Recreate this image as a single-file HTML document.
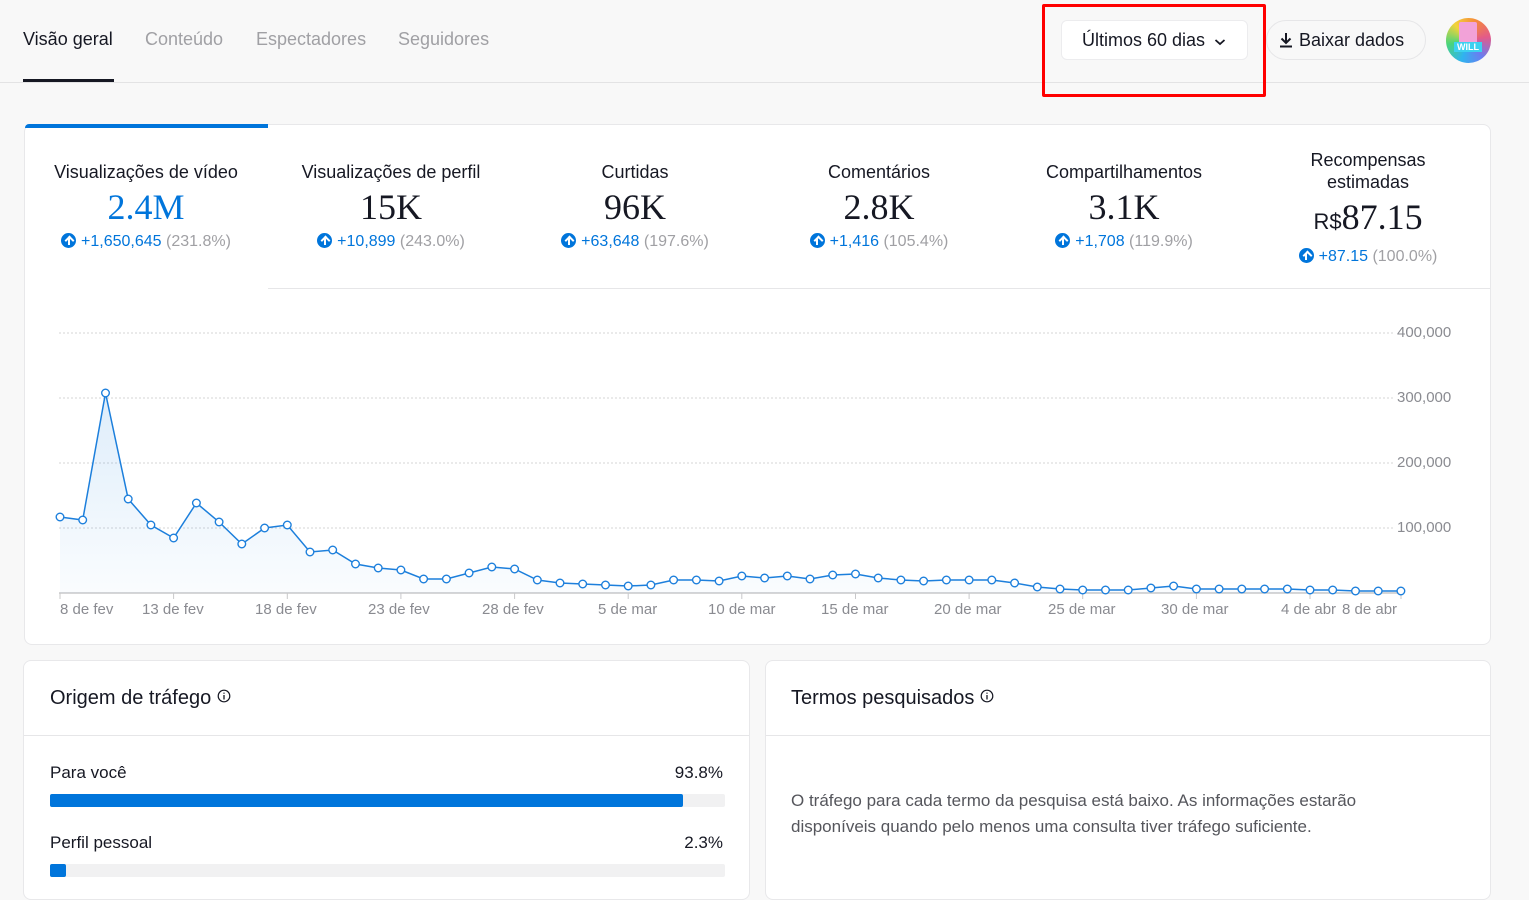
<!DOCTYPE html>
<html><head><meta charset="utf-8">
<style>
*{box-sizing:border-box;margin:0;padding:0}
body{width:1529px;height:880px;overflow:hidden;background:#f8f8f8;font-family:"Liberation Sans",Arial,sans-serif;color:#161823;position:relative}
.a{position:absolute}
.tab{position:absolute;top:29px;font-size:18px;color:#a0a0a4;white-space:nowrap}
.card{position:absolute;background:#fff;border:1px solid #e8e8ea;border-radius:8px;overflow:hidden}
.m{position:absolute;text-align:center;width:240px}
.m .l{font-size:18px;color:#161823;line-height:22px}
.m .v{font-family:"Liberation Serif",serif;font-size:36px;line-height:40px;margin-top:4px}
.m .d{font-size:16px;color:#0075db;margin-top:6px;white-space:nowrap}
.m .d span{color:#a0a0a4}
.up{display:inline-block;width:15px;height:15px;border-radius:50%;background:#0075db;vertical-align:-2px;margin-right:5px;position:relative}
.up:after{content:"";position:absolute;left:3px;top:3px;width:9px;height:9px;background:
 linear-gradient(#fff,#fff) 3.5px 2px/2px 7px no-repeat}
.up:before{content:"";position:absolute;left:4px;top:3px;width:5px;height:5px;border-left:2px solid #fff;border-top:2px solid #fff;transform:rotate(45deg);transform-origin:center;top:4px;left:5px}
.xl{position:absolute;top:601px;font-size:15px;color:#8a8b91;white-space:nowrap}
.yl{position:absolute;left:1397px;font-size:15px;color:#8a8b91}
</style></head><body>
<div class="tab" style="left:23px;color:#161823;font-weight:500">Visão geral</div>
<div class="tab" style="left:145px">Conteúdo</div>
<div class="tab" style="left:256px">Espectadores</div>
<div class="tab" style="left:398px">Seguidores</div>
<div class="a" style="left:23px;top:79px;width:91px;height:3px;background:#161823"></div>
<div class="a" style="left:0;top:82px;width:1529px;height:1px;background:#e3e3e4"></div>

<div class="a" style="left:1061px;top:20px;width:187px;height:40px;background:#fff;border:1px solid #ececee;border-radius:6px;font-size:18px;line-height:38px;padding-left:20px">Últimos 60 dias
<svg width="12" height="8" viewBox="0 0 12 8" style="margin-left:4px"><path d="M1.5 2 L6 6 L10.5 2" fill="none" stroke="#161823" stroke-width="1.8"/></svg></div>
<div class="a" style="left:1042px;top:4px;width:224px;height:93px;border:3px solid #f00;border-radius:2px"></div>
<div class="a" style="left:1266px;top:20px;width:160px;height:40px;border:1px solid #e6e6e8;border-radius:20px;font-size:18px;line-height:38px;padding-left:12px">
<svg width="14" height="16" viewBox="0 0 14 16" style="vertical-align:-2px;margin-right:6px"><path d="M7 1 V11 M2.5 6.5 L7 11 L11.5 6.5 M1 14.5 H13" fill="none" stroke="#161823" stroke-width="2"/></svg>Baixar dados</div>
<div class="a" style="left:1446px;top:18px;width:45px;height:45px;border-radius:50%;background:conic-gradient(from 200deg,#2fb4ef,#4ad47a,#f3d33a,#f58a3a,#e35a8a,#6a7df0,#2fb4ef)"></div>
<div class="a" style="left:1459px;top:22px;width:18px;height:24px;background:#f2a2d8;border-radius:2px"></div>
<div class="a" style="left:1454px;top:42px;width:28px;height:10px;background:#3cd1f0;font-size:9px;font-weight:bold;color:#fff;text-align:center;line-height:10px">WILL</div>

<div class="card" style="left:24px;top:124px;width:1467px;height:521px"></div>
<div class="a" style="left:25px;top:124px;width:243px;height:4px;background:#0075db;border-radius:4px 0 0 0"></div>
<div class="a" style="left:268px;top:288px;width:1222px;height:1px;background:#e6e6e8"></div>

<div class="m" style="left:26px;top:161px"><div class="l">Visualizações de vídeo</div><div class="v" style="color:#0075db">2.4M</div><div class="d"><i class="up"></i>+1,650,645 <span>(231.8%)</span></div></div>
<div class="m" style="left:271px;top:161px"><div class="l">Visualizações de perfil</div><div class="v">15K</div><div class="d"><i class="up"></i>+10,899 <span>(243.0%)</span></div></div>
<div class="m" style="left:515px;top:161px"><div class="l">Curtidas</div><div class="v">96K</div><div class="d"><i class="up"></i>+63,648 <span>(197.6%)</span></div></div>
<div class="m" style="left:759px;top:161px"><div class="l">Comentários</div><div class="v">2.8K</div><div class="d"><i class="up"></i>+1,416 <span>(105.4%)</span></div></div>
<div class="m" style="left:1004px;top:161px"><div class="l">Compartilhamentos</div><div class="v">3.1K</div><div class="d"><i class="up"></i>+1,708 <span>(119.9%)</span></div></div>
<div class="m" style="left:1248px;top:149px"><div class="l">Recompensas<br>estimadas</div><div class="v"><span style="font-family:'Liberation Sans',sans-serif;font-size:22px;font-weight:500">R$</span>87.15</div><div class="d"><i class="up"></i>+87.15 <span>(100.0%)</span></div></div>

<svg class="a" style="left:0;top:0" width="1529" height="640">
<defs><linearGradient id="g" x1="0" y1="0" x2="0" y2="1"><stop offset="0" stop-color="#0075db" stop-opacity=".13"/><stop offset="1" stop-color="#0075db" stop-opacity=".02"/></linearGradient></defs>
<g stroke="#d4d4d6" stroke-dasharray="2 2" stroke-width="1">
<line x1="59" y1="333" x2="1395" y2="333"/><line x1="59" y1="398" x2="1395" y2="398"/><line x1="59" y1="463" x2="1395" y2="463"/><line x1="59" y1="528" x2="1395" y2="528"/>
</g>
<line x1="59" y1="593" x2="1402" y2="593" stroke="#c8c8ca" stroke-width="1.5"/>
<g stroke="#c8c8ca"><line x1="60" y1="593" x2="60" y2="599"/><line x1="173.6" y1="593" x2="173.6" y2="599"/><line x1="287.3" y1="593" x2="287.3" y2="599"/><line x1="400.9" y1="593" x2="400.9" y2="599"/><line x1="514.6" y1="593" x2="514.6" y2="599"/><line x1="628.2" y1="593" x2="628.2" y2="599"/><line x1="741.8" y1="593" x2="741.8" y2="599"/><line x1="855.5" y1="593" x2="855.5" y2="599"/><line x1="969.1" y1="593" x2="969.1" y2="599"/><line x1="1082.7" y1="593" x2="1082.7" y2="599"/><line x1="1196.4" y1="593" x2="1196.4" y2="599"/><line x1="1310" y1="593" x2="1310" y2="599"/><line x1="1401" y1="593" x2="1401" y2="599"/></g>
<polygon fill="url(#g)" points="60,593 60,517 82.7,520 105.5,393 128.2,499 150.9,525 173.6,538 196.4,503 219.1,522 241.8,544 264.6,528 287.3,525 310,552 332.7,550 355.5,564 378.2,568 400.9,570 423.6,579 446.4,579 469.1,573 491.8,567 514.6,569 537.3,580 560,583 582.7,584 605.5,585 628.2,586 650.9,585 673.6,580 696.4,580 719.1,581 741.8,576 764.6,578 787.3,576 810,579 832.7,575 855.5,574 878.2,578 900.9,580 923.6,581 946.4,580 969.1,580 991.8,580 1014.6,583 1037.3,587 1060,589 1082.7,590 1105.5,590 1128.2,590 1150.9,588 1173.6,586 1196.4,589 1219.1,589 1241.8,589 1264.6,589 1287.3,589 1310,590 1332.7,590 1355.5,591 1378.2,591 1400.9,591 1400.9,593"/>
<polyline id="pl" fill="none" stroke="#1c7fdc" stroke-width="1.5" points="60,517 82.7,520 105.5,393 128.2,499 150.9,525 173.6,538 196.4,503 219.1,522 241.8,544 264.6,528 287.3,525 310,552 332.7,550 355.5,564 378.2,568 400.9,570 423.6,579 446.4,579 469.1,573 491.8,567 514.6,569 537.3,580 560,583 582.7,584 605.5,585 628.2,586 650.9,585 673.6,580 696.4,580 719.1,581 741.8,576 764.6,578 787.3,576 810,579 832.7,575 855.5,574 878.2,578 900.9,580 923.6,581 946.4,580 969.1,580 991.8,580 1014.6,583 1037.3,587 1060,589 1082.7,590 1105.5,590 1128.2,590 1150.9,588 1173.6,586 1196.4,589 1219.1,589 1241.8,589 1264.6,589 1287.3,589 1310,590 1332.7,590 1355.5,591 1378.2,591 1400.9,591"/>
<g fill="#fff" stroke="#1c7fdc" stroke-width="1.4">
<circle cx="60" cy="517" r="3.8"/><circle cx="82.7" cy="520" r="3.8"/><circle cx="105.5" cy="393" r="3.8"/><circle cx="128.2" cy="499" r="3.8"/><circle cx="150.9" cy="525" r="3.8"/><circle cx="173.6" cy="538" r="3.8"/><circle cx="196.4" cy="503" r="3.8"/><circle cx="219.1" cy="522" r="3.8"/><circle cx="241.8" cy="544" r="3.8"/><circle cx="264.6" cy="528" r="3.8"/><circle cx="287.3" cy="525" r="3.8"/><circle cx="310" cy="552" r="3.8"/><circle cx="332.7" cy="550" r="3.8"/><circle cx="355.5" cy="564" r="3.8"/><circle cx="378.2" cy="568" r="3.8"/><circle cx="400.9" cy="570" r="3.8"/><circle cx="423.6" cy="579" r="3.8"/><circle cx="446.4" cy="579" r="3.8"/><circle cx="469.1" cy="573" r="3.8"/><circle cx="491.8" cy="567" r="3.8"/><circle cx="514.6" cy="569" r="3.8"/><circle cx="537.3" cy="580" r="3.8"/><circle cx="560" cy="583" r="3.8"/><circle cx="582.7" cy="584" r="3.8"/><circle cx="605.5" cy="585" r="3.8"/><circle cx="628.2" cy="586" r="3.8"/><circle cx="650.9" cy="585" r="3.8"/><circle cx="673.6" cy="580" r="3.8"/><circle cx="696.4" cy="580" r="3.8"/><circle cx="719.1" cy="581" r="3.8"/><circle cx="741.8" cy="576" r="3.8"/><circle cx="764.6" cy="578" r="3.8"/><circle cx="787.3" cy="576" r="3.8"/><circle cx="810" cy="579" r="3.8"/><circle cx="832.7" cy="575" r="3.8"/><circle cx="855.5" cy="574" r="3.8"/><circle cx="878.2" cy="578" r="3.8"/><circle cx="900.9" cy="580" r="3.8"/><circle cx="923.6" cy="581" r="3.8"/><circle cx="946.4" cy="580" r="3.8"/><circle cx="969.1" cy="580" r="3.8"/><circle cx="991.8" cy="580" r="3.8"/><circle cx="1014.6" cy="583" r="3.8"/><circle cx="1037.3" cy="587" r="3.8"/><circle cx="1060" cy="589" r="3.8"/><circle cx="1082.7" cy="590" r="3.8"/><circle cx="1105.5" cy="590" r="3.8"/><circle cx="1128.2" cy="590" r="3.8"/><circle cx="1150.9" cy="588" r="3.8"/><circle cx="1173.6" cy="586" r="3.8"/><circle cx="1196.4" cy="589" r="3.8"/><circle cx="1219.1" cy="589" r="3.8"/><circle cx="1241.8" cy="589" r="3.8"/><circle cx="1264.6" cy="589" r="3.8"/><circle cx="1287.3" cy="589" r="3.8"/><circle cx="1310" cy="590" r="3.8"/><circle cx="1332.7" cy="590" r="3.8"/><circle cx="1355.5" cy="591" r="3.8"/><circle cx="1378.2" cy="591" r="3.8"/><circle cx="1400.9" cy="591" r="3.8"/>
</g>
</svg>
<div class="yl" style="top:324px">400,000</div>
<div class="yl" style="top:389px">300,000</div>
<div class="yl" style="top:454px">200,000</div>
<div class="yl" style="top:519px">100,000</div>
<div class="xl" style="left:60px">8 de fev</div>
<div class="xl" style="left:142px">13 de fev</div>
<div class="xl" style="left:255px">18 de fev</div>
<div class="xl" style="left:368px">23 de fev</div>
<div class="xl" style="left:482px">28 de fev</div>
<div class="xl" style="left:598px">5 de mar</div>
<div class="xl" style="left:708px">10 de mar</div>
<div class="xl" style="left:821px">15 de mar</div>
<div class="xl" style="left:934px">20 de mar</div>
<div class="xl" style="left:1048px">25 de mar</div>
<div class="xl" style="left:1161px">30 de mar</div>
<div class="xl" style="left:1281px">4 de abr</div>
<div class="xl" style="left:1342px">8 de abr</div>

<div class="card" style="left:23px;top:660px;width:727px;height:240px">
<div class="a" style="left:26px;top:26px;font-size:20px;font-weight:500">Origem de tráfego <svg width="14" height="14" viewBox="0 0 14 14" style="vertical-align:1px"><circle cx="7" cy="7" r="5.8" fill="none" stroke="#161823" stroke-width="1.2"/><path d="M7 6 V10.5 M7 3.6 V4.8" stroke="#161823" stroke-width="1.3"/></svg></div>
<div class="a" style="left:0;top:74px;width:727px;height:1px;background:#e6e6e8"></div>
<div class="a" style="left:26px;top:102px;font-size:17px">Para você</div>
<div class="a" style="right:26px;top:102px;font-size:17px;font-weight:500">93.8%</div>
<div class="a" style="left:26px;top:133px;width:675px;height:13px;background:#f1f1f2;border-radius:2px"><div style="width:633px;height:13px;background:#0075db;border-radius:2px"></div></div>
<div class="a" style="left:26px;top:172px;font-size:17px">Perfil pessoal</div>
<div class="a" style="right:26px;top:172px;font-size:17px;font-weight:500">2.3%</div>
<div class="a" style="left:26px;top:203px;width:675px;height:13px;background:#f1f1f2;border-radius:2px"><div style="width:16px;height:13px;background:#0075db;border-radius:2px"></div></div>
</div>

<div class="card" style="left:765px;top:660px;width:726px;height:240px">
<div class="a" style="left:25px;top:26px;font-size:20px;font-weight:500">Termos pesquisados <svg width="14" height="14" viewBox="0 0 14 14" style="vertical-align:1px"><circle cx="7" cy="7" r="5.8" fill="none" stroke="#161823" stroke-width="1.2"/><path d="M7 6 V10.5 M7 3.6 V4.8" stroke="#161823" stroke-width="1.3"/></svg></div>
<div class="a" style="left:0;top:74px;width:726px;height:1px;background:#e6e6e8"></div>
<div class="a" style="left:25px;top:127px;font-size:17px;line-height:26px;color:#55565c;width:640px">O tráfego para cada termo da pesquisa está baixo. As informações estarão disponíveis quando pelo menos uma consulta tiver tráfego suficiente.</div>
</div>
</body></html>
